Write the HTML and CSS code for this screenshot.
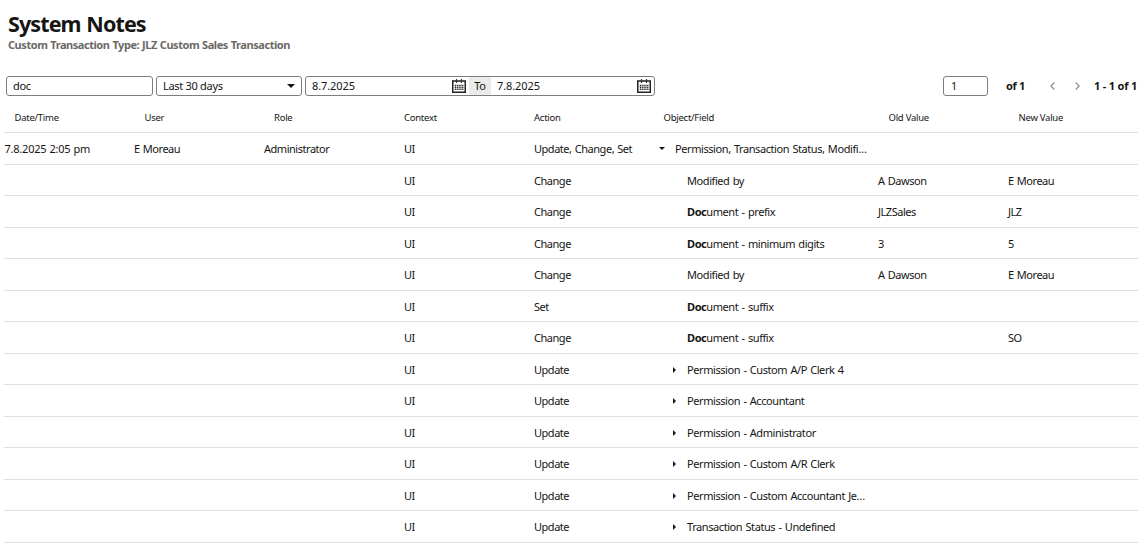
FILE: index.html
```
<!DOCTYPE html>
<html lang="en">
<head>
<meta charset="utf-8">
<title>System Notes</title>
<link rel="stylesheet" href="styles.css">
</head>
<body>
<svg class="defs" width="0" height="0">
  <symbol id="cal" viewBox="0 0 14 14">
    <path d="M.75 2h12.5v11.25H.75z" fill="none" stroke="#222" stroke-width="1.5"/>
    <path d="M4.5 0v4M9.5 0v4" stroke="#333" stroke-width="1.2"/>
    <path d="M2.8 6.5h8.6M2.8 8.5h8.6M2.8 10.4h8.6" stroke="#222" stroke-width="1.3" stroke-dasharray="1.2 .65"/>
  </symbol>
</svg>
<header class="head">
  <h1 class="title">System Notes</h1>
  <h2 class="subtitle">Custom Transaction Type: JLZ Custom Sales Transaction</h2>
</header>
<div class="toolbar">
  <div class="field search">doc</div>
  <div class="field period"><span>Last 30 days</span><i class="caret"></i></div>
  <div class="field range">
    <div class="date"><span class="num">8.7.2025</span><svg class="cal"><use href="#cal"/></svg></div>
    <span class="to">To</span>
    <div class="date"><span class="num">7.8.2025</span><svg class="cal"><use href="#cal"/></svg></div>
  </div>
  <div class="pager">
    <div class="field page">1</div>
    <b class="of">of 1</b>
    <svg class="chev prev" viewBox="0 0 5 8"><path d="M4.3.5.8 4l3.5 3.5"/></svg>
    <svg class="chev next" viewBox="0 0 5 8"><path d="M.7.5 4.2 4 .7 7.5"/></svg>
    <b class="count">1 - 1 of 1</b>
  </div>
</div>
<main class="table">
  <div class="row header"><span>Date/Time</span><span>User</span><span>Role</span><span>Context</span><span>Action</span><span>Object/Field</span><span>Old Value</span><span>New Value</span></div>
  <div class="row"><span class="num">7.8.2025 2:05 pm</span><span>E Moreau</span><span>Administrator</span><span class="in">UI</span><span class="in">Update, Change, Set</span><span class="obj top"><i class="down"></i>Permission, Transaction Status, Modifi…</span><span></span><span></span></div>
  <div class="row"><span></span><span></span><span></span><span class="in">UI</span><span class="in">Change</span><span class="obj">Modified by</span><span class="in">A Dawson</span><span class="in">E Moreau</span></div>
  <div class="row"><span></span><span></span><span></span><span class="in">UI</span><span class="in">Change</span><span class="obj"><b>Doc</b>ument - prefix</span><span class="in">JLZSales</span><span class="in">JLZ</span></div>
  <div class="row"><span></span><span></span><span></span><span class="in">UI</span><span class="in">Change</span><span class="obj"><b>Doc</b>ument - minimum digits</span><span class="in">3</span><span class="in">5</span></div>
  <div class="row"><span></span><span></span><span></span><span class="in">UI</span><span class="in">Change</span><span class="obj">Modified by</span><span class="in">A Dawson</span><span class="in">E Moreau</span></div>
  <div class="row"><span></span><span></span><span></span><span class="in">UI</span><span class="in">Set</span><span class="obj"><b>Doc</b>ument - suffix</span><span></span><span></span></div>
  <div class="row"><span></span><span></span><span></span><span class="in">UI</span><span class="in">Change</span><span class="obj"><b>Doc</b>ument - suffix</span><span></span><span class="in">SO</span></div>
  <div class="row"><span></span><span></span><span></span><span class="in">UI</span><span class="in">Update</span><span class="obj"><i class="right"></i>Permission - Custom A/P Clerk 4</span><span></span><span></span></div>
  <div class="row"><span></span><span></span><span></span><span class="in">UI</span><span class="in">Update</span><span class="obj"><i class="right"></i>Permission - Accountant</span><span></span><span></span></div>
  <div class="row"><span></span><span></span><span></span><span class="in">UI</span><span class="in">Update</span><span class="obj"><i class="right"></i>Permission - Administrator</span><span></span><span></span></div>
  <div class="row"><span></span><span></span><span></span><span class="in">UI</span><span class="in">Update</span><span class="obj"><i class="right"></i>Permission - Custom A/R Clerk</span><span></span><span></span></div>
  <div class="row"><span></span><span></span><span></span><span class="in">UI</span><span class="in">Update</span><span class="obj"><i class="right"></i>Permission - Custom Accountant Je…</span><span></span><span></span></div>
  <div class="row"><span></span><span></span><span></span><span class="in">UI</span><span class="in">Update</span><span class="obj"><i class="right"></i>Transaction Status - Undefined</span><span></span><span></span></div>
</main>
</body>
</html>
```
FILE: styles.css
```
* { box-sizing: border-box; }
body { margin: 0; height: 547px; overflow: hidden; background: #fff; color: #161513; font: 11px/16px "Noto Sans", sans-serif; letter-spacing: -0.3px; }
.defs { display: block; }
.head { padding: 10px 8px 0; height: 76px; }
.title { margin: 0; font-size: 21.5px; line-height: 28px; font-weight: 700; letter-spacing: -0.9px; word-spacing: 1px; }
.subtitle { margin: 0; font-size: 11px; line-height: 14px; font-weight: 700; color: #6b6966; letter-spacing: -0.45px; word-spacing: 0.5px; }
.toolbar { display: flex; align-items: center; gap: 3px; height: 20px; padding: 0 6px; }
.field { height: 20px; border: 1px solid #7d7d7c; border-radius: 3px; display: flex; align-items: center; padding: 0 6px; }
.search { width: 147px; }
.period { width: 146px; justify-content: space-between; }
.caret { border: 4px solid transparent; border-top: 4px solid #161513; border-bottom: 0; }
.range { width: 350px; padding: 0; overflow: hidden; }
.date { display: flex; align-items: center; justify-content: space-between; flex: 1; padding: 0 3.5px 0 6px; }
.num { letter-spacing: -0.1px; }
.cal { width: 14px; height: 14px; }
.to { width: 22px; line-height: 18px; background: #ebebea; text-align: center; }
.pager { display: flex; align-items: center; margin-left: auto; white-space: nowrap; }
.page { width: 45px; padding-left: 7px; }
.of { margin-left: 18px; width: 20px; }
.chev { width: 5px; height: 8px; fill: none; stroke: #8a8a8a; stroke-width: 1.1; }
.prev { margin-left: 24px; }
.next { margin: 0 14px 0 20px; }
.count { width: 44px; letter-spacing: -0.2px; }
.table { width: 1134px; margin-left: 4px; }
.row { display: grid; grid-template-columns: 130px 130px 130px 130px 130px 214px 130px 140px; height: 31.5px; padding-top: 2px; align-items: center; border-bottom: 1px solid #dfdfde; white-space: nowrap; letter-spacing: -0.47px; word-spacing: 0.8px; }
.header { height: 37px; padding: 8px 0 0 10.5px; font-size: 9.5px; letter-spacing: -0.25px; word-spacing: 0; grid-template-columns: 130px 129.5px 130px 130px 129.5px 225px 130px 120px; }
.row .num { padding-left: 0.4px; letter-spacing: -0.2px; word-spacing: 0.3px; }
.in { padding-left: 10px; }
.obj { position: relative; padding-left: 33px; letter-spacing: -0.42px; }
.top { padding-left: 21px; }
.down, .right { position: absolute; border: 3px solid transparent; }
.down { left: 5px; top: 6px; border-top: 3px solid #161513; border-bottom: 0; }
.right { left: 19px; top: 5px; border-left: 3px solid #161513; border-right: 0; }
```
